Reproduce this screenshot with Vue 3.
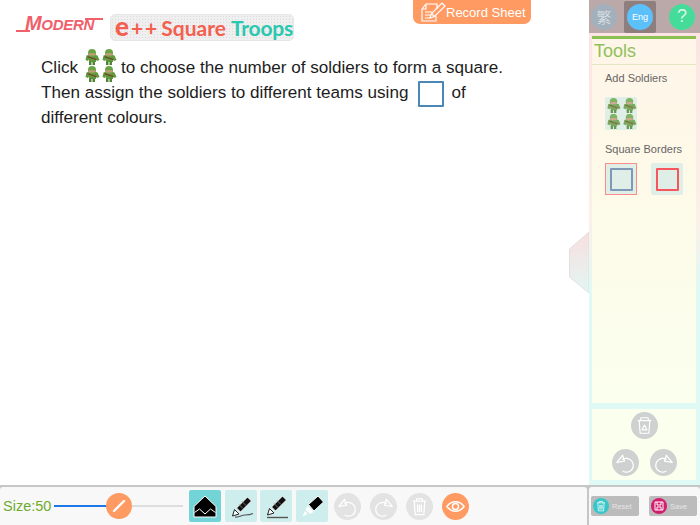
<script setup>
const pens = [
  { id: "fill", active: true },
  { id: "wave" },
  { id: "line" },
  { id: "marker" }
]
</script>

<template>
  <div class="page">
    <svg class="defs" width="0" height="0">
      <symbol id="soldier" viewBox="0 0 16 16">
        <path d="M2.500 6.500c1-1 10-1 11 0l2 4.500-2.500 1-1-1.500v2.500h-7v-2.500l-1 1.500-2.500-1z" fill="#5f9a3c" />
        <circle cx="8" cy="4" r="4" fill="#6aa544" />
        <rect x="4.500" y="4.200" width="7" height="2.300" rx="1" fill="#c79a78" />
        <path d="M3.500 7l9 3v1.300l-9-3z" fill="#7a3f2c" />
        <path d="M5 12.500h2.500V16H5zM8.500 12.500H11V16H8.500z" fill="#4f8432" />
      </symbol>
      <symbol id="undo" viewBox="0 0 28 28">
        <path d="M11 10.500c5.500-2 11 1 11 6.500s-6 8.500-10.500 6" fill="none" stroke="#fff" stroke-width="1.300" stroke-linecap="round" />
        <path d="M5 14l6-7.500 2 6z" fill="none" stroke="#fff" stroke-width="1.300" stroke-linejoin="round" />
      </symbol>
      <symbol id="bin" viewBox="0 0 28 28">
        <path d="M7 8.500h14M11 8.500V6h6v2.500M8.500 8.500l1 14h9l1-14M12 12v8M14 12v8M16 12v8" fill="none" stroke="#fff" stroke-width="1.300" />
      </symbol>
    </svg>

    <div class="top">
      <main class="main">
        <header class="header">
          <div class="modern"><span class="modern-text">M<small>ODERN</small></span></div>
          <div class="title">
            <b class="e">e</b><span class="coral plus">++</span><span class="coral">Square</span><span class="teal">Troops</span>
          </div>
          <button class="record">
            <svg width="25" height="22" viewBox="0 0 25 22" fill="none" stroke="#fff" stroke-width="1.200">
              <path d="M1 8v12h14v-5M1 8l4-5h11v5M5 3v5H1M4 11h7M4 14h6M4 17h5" />
              <path d="M9 17l1.500-4.500L21 2l3 3-10.500 10.500zM10.500 12.500l3 3" />
            </svg>
            <span>Record Sheet</span>
          </button>
        </header>

        <div class="question">
          <div class="line">
            <span>Click</span>
            <svg class="four inline-four" viewBox="0 0 33 33">
              <use href="#soldier" x="0" y="0" width="16" height="16" />
              <use href="#soldier" x="17" y="0" width="16" height="16" />
              <use href="#soldier" x="0" y="17" width="16" height="16" />
              <use href="#soldier" x="17" y="17" width="16" height="16" />
            </svg>
            <span>to choose the number of soldiers to form a square.</span>
          </div>
          <div class="line">
            <span>Then assign the soldiers to different teams using</span>
            <span class="blue-square"></span>
            <span>of</span>
          </div>
          <div class="line">different colours.</div>
        </div>
      </main>

      <aside class="side">
        <svg class="handle" width="20" height="62" viewBox="0 0 20 62">
          <defs>
            <linearGradient id="handleFill" x1="0" y1="0" x2="0" y2="1">
              <stop offset="0" stop-color="#f8dfdf" />
              <stop offset="1" stop-color="#e2f6f3" />
            </linearGradient>
          </defs>
          <path d="M20 0L.500 17v28L20 61z" fill="url(#handleFill)" stroke="#e3dfdf" />
        </svg>
        <div class="langs">
          <span class="lang-slot"><span class="lang trad">繁</span></span>
          <span class="lang-slot selected"><span class="lang eng">Eng</span></span>
          <span class="lang-slot"><span class="lang help">?</span></span>
        </div>

        <section class="tools">
          <h2>Tools</h2>
          <h3>Add Soldiers</h3>
          <div class="tile soldiers">
            <svg class="four" viewBox="0 0 33 33">
              <use href="#soldier" x="0" y="0" width="16" height="16" />
              <use href="#soldier" x="17" y="0" width="16" height="16" />
              <use href="#soldier" x="0" y="17" width="16" height="16" />
              <use href="#soldier" x="17" y="17" width="16" height="16" />
            </svg>
          </div>
          <h3 class="second">Square Borders</h3>
          <div class="borders">
            <div class="tile picked"><span class="sq sq-blue"></span></div>
            <div class="tile"><span class="sq sq-red"></span></div>
          </div>
        </section>

        <section class="actions">
          <span class="round grey"><svg viewBox="0 0 28 28"><path d="M7 9h14M8.500 9l1 13h9l1-13M9.500 9l1-3h7l1 3M11.500 18.500l2.500-5 2.500 5z" fill="none" stroke="#fff" stroke-width="1.200" stroke-linejoin="round" /></svg></span>
          <div class="undo-row">
            <span class="round grey"><svg viewBox="0 0 28 28"><use href="#undo" /></svg></span>
            <span class="round grey flip"><svg viewBox="0 0 28 28"><use href="#undo" /></svg></span>
          </div>
        </section>
      </aside>
    </div>

    <footer class="bar">
      <div class="bar-left">
        <span class="size">Size:50</span>
        <div class="slider">
          <div class="track-on"></div>
          <div class="knob">
            <svg width="14" height="14" viewBox="0 0 14 14"><path d="M2 12L12 2" stroke="#fff" stroke-width="2.400" stroke-linecap="round" /></svg>
          </div>
        </div>
        <div class="pens">
          <button v-for="p in pens" :key="p.id" class="pen" :class="{ active: p.active }">
            <svg v-if="p.id === 'fill'" width="28" height="28" viewBox="0 0 28 28">
              <path d="M14 4L25 14.500V25H3V14.500z" fill="#000" stroke="#fff" stroke-width="1" stroke-linejoin="round" />
              <path d="M3.500 20.500l5-3.500 5.500 5 5.500-5 5 3.500" fill="none" stroke="#fff" stroke-width="1" />
            </svg>
            <svg v-else-if="p.id === 'wave'" width="28" height="28" viewBox="0 0 28 28">
              <path d="M9.500 16L20.500 5l4 4L13.500 20z" fill="#111" stroke="#fff" stroke-width="1" />
              <path d="M12 12.500l4 4M15 9.500l4 4" stroke="#888" stroke-width=".8" />
              <path d="M5.500 24l2-6.500 4.500 4.500z" fill="#fff" stroke="#222" stroke-width="1" />
              <path d="M8 25c5 .500 6-2 10-2s5 0 8-1.500" fill="none" stroke="#555" stroke-width="1.200" />
            </svg>
            <svg v-else-if="p.id === 'line'" width="28" height="28" viewBox="0 0 28 28">
              <path d="M9.500 15L20.500 4l4 4L13.500 19z" fill="#111" stroke="#fff" stroke-width="1" />
              <path d="M12 11.500l4 4M15 8.500l4 4" stroke="#888" stroke-width=".8" />
              <path d="M5.500 23l2-6.500 4.500 4.500z" fill="#fff" stroke="#222" stroke-width="1" />
              <path d="M5 25.500h21" fill="none" stroke="#555" stroke-width="1.400" />
            </svg>
            <svg v-else width="28" height="28" viewBox="0 0 28 28">
              <path d="M10.500 12.500L20 4l5.500 6-9.500 9z" fill="#000" stroke="#fff" stroke-width="1" />
              <path d="M9.500 14l6 6-3.500 2-4.500-4.500zM7 19l2.500 3-5 2.500z" fill="#fff" />
            </svg>
          </button>
        </div>
        <div class="rounds">
          <span class="round light"><svg viewBox="0 0 28 28"><use href="#undo" /></svg></span>
          <span class="round light flip"><svg viewBox="0 0 28 28"><use href="#undo" /></svg></span>
          <span class="round light"><svg viewBox="0 0 28 28"><use href="#bin" /></svg></span>
          <span class="round eye">
            <svg viewBox="0 0 28 28"><path d="M5 14c5-6.500 13-6.500 18 0-5 6.500-13 6.500-18 0z" fill="none" stroke="#fff" stroke-width="1.400" /><circle cx="14" cy="14" r="3.200" fill="none" stroke="#fff" stroke-width="1.600" /></svg>
          </span>
        </div>
      </div>
      <div class="bar-right">
        <button class="action">
          <span class="dot teal-dot"><svg viewBox="0 0 28 28"><use href="#bin" /></svg></span>Reset
        </button>
        <button class="action">
          <span class="dot pink-dot"><svg viewBox="0 0 16 16"><path d="M4 4h8v8H4zM6 4v3h4V4M6 12V9h4v3" fill="none" stroke="#fff" stroke-width="1" /></svg></span>Save
        </button>
      </div>
    </footer>
  </div>
</template>

<style>
html, body {
  margin: 0;
  background: #fff;
}
</style>

<style scoped>
.page {
  width: 700px;
  height: 525px;
  display: flex;
  flex-direction: column;
  overflow: hidden;
  font-family: "Liberation Sans", Arial, sans-serif;
  background: #fff;
}

.defs {
  position: absolute;
}

.top {
  flex: 1;
  display: flex;
  min-height: 0;
}

.main {
  width: 589px;
  flex: none;
}

.header {
  height: 42px;
  display: flex;
  align-items: flex-start;
  padding-left: 16px;
}

.modern {
  width: 87px;
  height: 17px;
  margin-top: 15px;
  position: relative;
  color: #f0606a;
  text-align: center;
  white-space: nowrap;
}

.modern::before,
.modern::after {
  content: "";
  position: absolute;
  height: 2px;
  background: #f0606a;
}

.modern::before {
  left: 0;
  width: 14px;
  bottom: 0;
}

.modern::after {
  right: 0;
  width: 18px;
  top: 3px;
}

.modern-text {
  display: inline-block;
  font-size: 20px;
  line-height: 17px;
  font-weight: 700;
  font-style: italic;
  letter-spacing: -.3px;
}

.modern-text small {
  font-size: 15px;
}

.title {
  width: 184px;
  height: 27px;
  margin: 14px 0 0 7px;
  box-sizing: border-box;
  padding-left: 4px;
  border-radius: 5px;
  border: 1px solid #e6e6e6;
  background-color: #efefef;
  background-image: radial-gradient(#dcdcdc 0.6px, transparent 0.7px);
  background-size: 3px 3px;
  font-family: Lato, sans-serif;
  font-weight: 700;
  font-size: 21px;
  line-height: 23px;
  white-space: nowrap;
}

.e {
  color: #f4604f;
  font-size: 26px;
  font-weight: 900;
}

.plus {
  margin: 0 2px 0 2px;
  letter-spacing: 2px;
}

.coral {
  color: #f4604f;
}

.teal {
  color: #2bc8b0;
  margin-left: 5px;
  letter-spacing: -.2px;
}

.record {
  width: 118px;
  height: 24px;
  margin-left: 119px;
  padding: 0 0 0 8px;
  display: flex;
  align-items: center;
  gap: 0;
  border: 0;
  border-radius: 0 0 7px 7px;
  background: #ff9a62;
  color: #fff;
  font: 13px "Liberation Sans", Arial, sans-serif;
  white-space: nowrap;
}

.question {
  padding: 13px 0 0 41px;
  font-size: 17.1px;
  line-height: 25px;
  color: #1d1d1d;
}

.line {
  display: flex;
  align-items: center;
  height: 25px;
  white-space: nowrap;
}

.inline-four {
  margin: -5px 4px 0 6px;
}

.four {
  width: 33px;
  height: 33px;
  flex: none;
}

.blue-square {
  width: 26px;
  height: 26px;
  margin: 2px 7px 0 10px;
  box-sizing: border-box;
  border: 2px solid #4b87b5;
  border-radius: 1px;
}

.side {
  position: relative;
  flex: 1;
  display: flex;
  flex-direction: column;
  background: linear-gradient(#fbe2e2, #fcf0e8 45%, #dff9f5 60%, #dff9f5);
}

.handle {
  position: absolute;
  left: -20px;
  top: 232px;
}

.langs {
  height: 33px;
  flex: none;
  display: flex;
  align-items: center;
  padding-left: 2px;
  gap: 7px;
  background: #bba9a9;
}

.lang-slot {
  width: 32px;
  height: 32px;
  display: flex;
  align-items: center;
  justify-content: center;
  border-radius: 2px;
}

.lang-slot:first-child {
  width: 26px;
}

.lang-slot:last-child {
  margin-left: 3px;
}

.lang-slot.selected {
  background: #8e7f7e;
}

.lang {
  width: 26px;
  height: 26px;
  flex: none;
  border-radius: 50%;
  display: flex;
  align-items: center;
  justify-content: center;
  color: #fff;
}

.trad {
  background: #a3b0bb;
  color: #dfe5ea;
  font-family: "Noto Sans CJK TC", sans-serif;
  font-size: 15px;
  font-weight: 300;
}

.eng {
  background: #5cc0fb;
  font-size: 9px;
}

.help {
  background: #45dc9a;
  color: #d8f8ea;
  font-size: 18px;
}

.tools {
  flex: 1;
  margin: 3px 4px 0 3px;
  border-top: 3px solid #8cc152;
  background: linear-gradient(#fff5e8, #fdfbe9 50%, #fbffee);
}

.tools h2 {
  margin: 0;
  padding: 2px 0 3px 2px;
  height: 20px;
  border-bottom: 1px solid #dfe8bf;
  font-size: 18px;
  line-height: 20px;
  font-weight: 400;
  color: #8fc15a;
}

.tools h3 {
  margin: 6px 0 0 13px;
  font-size: 11px;
  line-height: 15px;
  font-weight: 400;
  color: #666;
}

.tools h3.second {
  margin-top: 12px;
}

.tile {
  width: 32px;
  height: 32px;
  box-sizing: border-box;
  display: flex;
  align-items: center;
  justify-content: center;
  border-radius: 2px;
  background: #dfeee6;
}

.soldiers {
  margin: 11px 0 0 13px;
  height: 33px;
}

.soldiers .four {
  width: 31px;
  height: 31px;
  opacity: .8;
}

.borders {
  display: flex;
  gap: 14px;
  margin: 6px 0 0 13px;
}

.picked {
  border: 1px solid #ff8a8a;
  border-radius: 0;
}

.sq {
  width: 23px;
  height: 23px;
  box-sizing: border-box;
  border-radius: 1px;
}

.sq-blue {
  border: 2px solid #7d99b5;
}

.sq-red {
  border: 2px solid #f7575c;
}

.actions {
  height: 71px;
  flex: none;
  margin: 6px 4px 5px 3px;
  display: flex;
  flex-direction: column;
  align-items: center;
  gap: 10px;
  padding-top: 3px;
  box-sizing: border-box;
  background: #fbffee;
}

.undo-row {
  display: flex;
  gap: 11px;
}

.round {
  width: 27px;
  height: 27px;
  flex: none;
  border-radius: 50%;
  display: block;
}

.round svg {
  width: 27px;
  height: 27px;
  display: block;
}

.flip svg {
  transform: scaleX(-1);
}

.grey {
  background: #cdd1cf;
}

.light {
  background: #e3e3e3;
}

.eye {
  background: #ff9a62;
}

.bar {
  height: 40px;
  flex: none;
  display: flex;
  background: #c6c6c6;
  padding-top: 2px;
  box-sizing: border-box;
}

.bar-left,
.bar-right {
  background: #f8f8f8;
  border-radius: 3px 3px 0 0;
  display: flex;
  align-items: center;
}

.bar-left {
  width: 587px;
  margin-right: 2px;
  padding-left: 3px;
  box-sizing: border-box;
}

.bar-right {
  flex: 1;
  padding-left: 2px;
  gap: 10px;
}

.size {
  width: 51px;
  flex: none;
  font-size: 14.500px;
  color: #6eab2c;
}

.slider {
  position: relative;
  width: 129px;
  height: 2px;
  flex: none;
  background: #dedede;
}

.track-on {
  width: 53px;
  height: 2px;
  background: #1f78e8;
}

.knob {
  position: absolute;
  left: 52px;
  top: -12px;
  width: 26px;
  height: 26px;
  border-radius: 50%;
  background: #ff9a62;
  display: flex;
  align-items: center;
  justify-content: center;
}

.pens {
  display: flex;
  gap: 3.500px;
  margin-left: 6px;
}

.pen {
  width: 32px;
  height: 32px;
  padding: 0;
  border: 0;
  border-radius: 2px;
  background: #cdeeec;
  display: flex;
  align-items: center;
  justify-content: center;
}

.pen.active {
  background: #72d4d6;
}

.rounds {
  display: flex;
  gap: 9px;
  margin-left: 6px;
}

.action {
  width: 48px;
  height: 20px;
  padding: 0 0 0 2px;
  border: 0;
  border-radius: 2px;
  background: #bcbcbc;
  color: #e6e6e6;
  display: flex;
  align-items: center;
  gap: 3px;
  font: 7.500px "Liberation Sans", Arial, sans-serif;
}

.dot {
  width: 16px;
  height: 16px;
  border-radius: 50%;
  flex: none;
}

.dot svg {
  width: 16px;
  height: 16px;
  display: block;
}

.teal-dot {
  background: #38c6c8;
}

.pink-dot {
  background: #d21e6e;
}
</style>
